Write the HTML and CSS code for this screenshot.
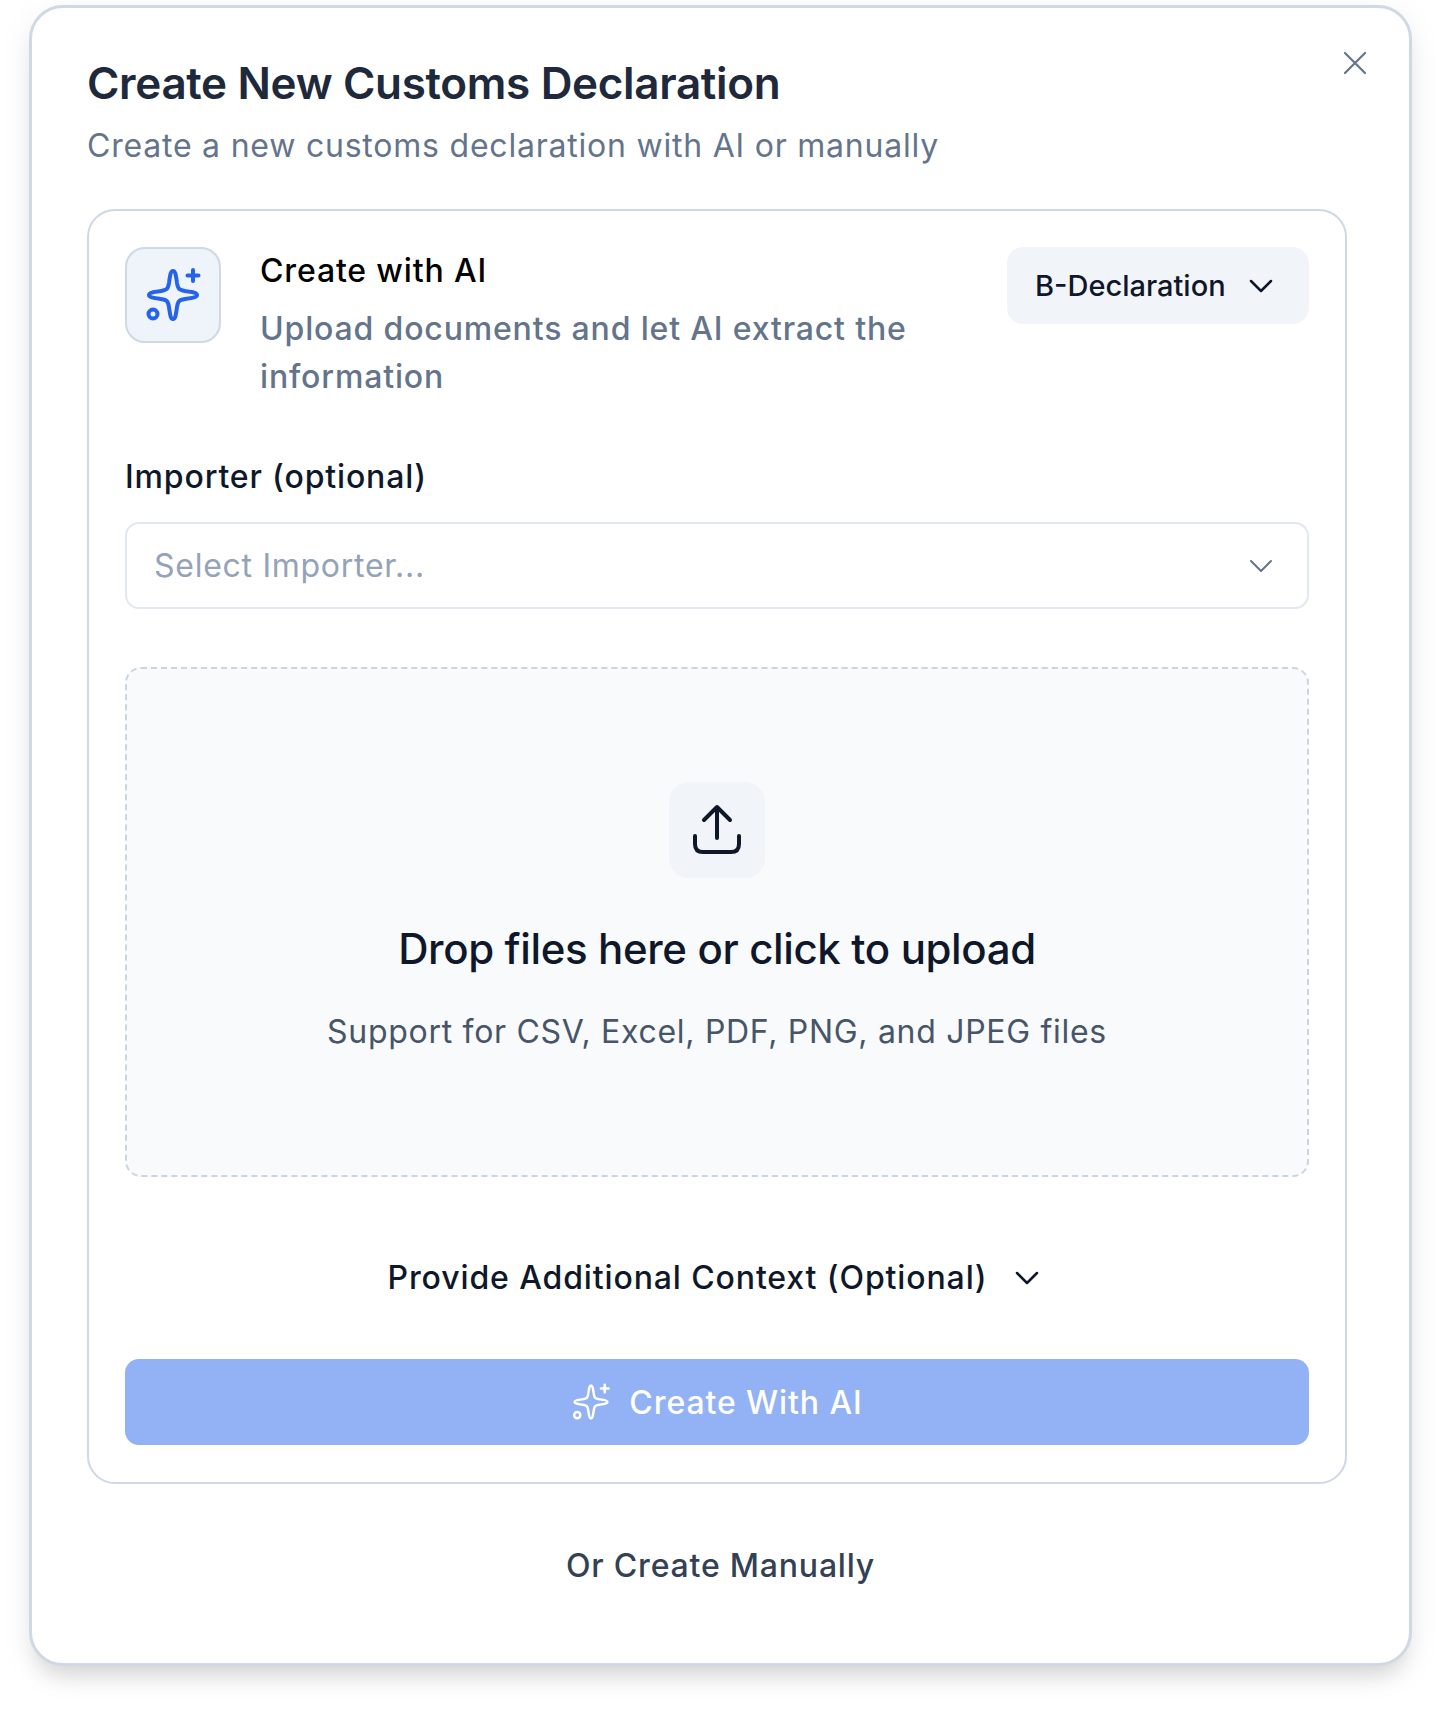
FILE: index.html
```html
<!DOCTYPE html>
<html lang="en">
<head>
    <title>Create New Customs Declaration</title>
    <meta name="viewport" content="width=device-width, initial-scale=1.0">
    <link rel="stylesheet" href="styles.css">
</head>
<body>
    <div class="dialog">
        <button class="close-btn" type="button" aria-label="Close">
            <svg viewBox="0 0 24 24" width="24" height="24"><path d="M2 2 L22 22 M22 2 L2 22"/></svg>
        </button>

        <h1 class="dialog-title">Create New Customs Declaration</h1>
        <p class="dialog-subtitle">Create a new customs declaration with AI or manually</p>

        <div class="ai-card">
            <div class="ai-head">
                <div class="ai-icon">
                    <svg class="sparkle" viewBox="0 0 64 64" width="64" height="64">
                        <path d="M32 8 C34.5 8 35 13 36 20 C37 26 38 27 44 28 C51 29 56 29.5 56 32 C56 34.5 51 35 44 36 C38 37 37 38 36 44 C35 51 34.5 56 32 56 C29.5 56 29 51 28 44 C27 38 26 37 20 36 C13 35 8 34.5 8 32 C8 29.5 13 29 20 28 C26 27 27 26 28 20 C29 13 29.5 8 32 8 Z"/>
                        <path d="M52 7 V18 M46.5 12.5 H57.5"/>
                        <circle cx="12" cy="51" r="4.5"/>
                    </svg>
                </div>
                <div class="ai-text">
                    <h2>Create with AI</h2>
                    <p>Upload documents and let AI extract the information</p>
                </div>
                <div class="type-select">
                    <span>B-Declaration</span>
                    <svg class="chevron" viewBox="0 0 24 14" width="24" height="14"><path d="M2 2 L12 12 L22 2"/></svg>
                </div>
            </div>

            <div class="field-label">Importer (optional)</div>
            <div class="importer-select">
                <span>Select Importer...</span>
                <svg class="chevron chevron-light" viewBox="0 0 24 14" width="24" height="14"><path d="M2 2 L12 12 L22 2"/></svg>
            </div>

            <div class="dropzone">
                <div class="upload-icon">
                    <svg viewBox="0 0 64 64" width="64" height="64">
                        <path d="M32 9 V40 M19 22 L32 9 L45 22"/>
                        <path d="M10 38 V46 Q10 54 18 54 H46 Q54 54 54 46 V38"/>
                    </svg>
                </div>
                <h3>Drop files here or click to upload</h3>
                <p>Support for CSV, Excel, PDF, PNG, and JPEG files</p>
            </div>

            <div class="context-toggle">
                <span>Provide Additional Context (Optional)</span>
                <svg class="chevron" viewBox="0 0 24 14" width="24" height="14"><path d="M2 2 L12 12 L22 2"/></svg>
            </div>

            <button class="create-btn" type="button">
                <svg class="sparkle" viewBox="0 0 64 64" width="44" height="44">
                    <path d="M32 8 C34.5 8 35 13 36 20 C37 26 38 27 44 28 C51 29 56 29.5 56 32 C56 34.5 51 35 44 36 C38 37 37 38 36 44 C35 51 34.5 56 32 56 C29.5 56 29 51 28 44 C27 38 26 37 20 36 C13 35 8 34.5 8 32 C8 29.5 13 29 20 28 C26 27 27 26 28 20 C29 13 29.5 8 32 8 Z"/>
                    <path d="M52 7 V18 M46.5 12.5 H57.5"/>
                    <circle cx="12" cy="51" r="4.5"/>
                </svg>
                <span>Create With AI</span>
            </button>
        </div>

        <div class="manual-link">Or Create Manually</div>
    </div>
</body>
</html>
```

FILE: styles.css
```css
* {
    box-sizing: border-box;
}
body {
    margin: 0;
    padding: 5px 28px 0 29px;
    background-color: #fff;
    font-family: Inter, "Liberation Sans", sans-serif;
    height: 1719px;
    overflow: hidden;
}
svg {
    display: block;
    fill: none;
    stroke-linecap: round;
    stroke-linejoin: round;
}
.dialog {
    position: relative;
    height: 1661px;
    padding: 51px 62px 0 55px;
    background-color: #fff;
    border: 3px solid #cfd8e5;
    border-radius: 34px;
    box-shadow: 0 16px 20px -6px rgba(0, 0, 0, 0.12), 0 8px 36px rgba(0, 0, 0, 0.06);
}
.close-btn {
    position: absolute;
    top: 43px;
    right: 42px;
    padding: 0;
    border: none;
    background: none;
}
.close-btn svg {
    stroke: #64748b;
    stroke-width: 2.2;
}
.dialog-title {
    margin: 0;
    font-size: 44px;
    line-height: 48px;
    font-weight: 600;
    letter-spacing: -0.33px;
    color: #1e293b;
}
.dialog-subtitle {
    margin: 17px 0 0;
    font-size: 32px;
    line-height: 44px;
    letter-spacing: 0.78px;
    color: #64748b;
}
.ai-card {
    margin-top: 41px;
    padding: 36px 36px 37px;
    border: 2px solid #cfd8e5;
    border-radius: 28px;
}
.ai-head {
    display: flex;
    align-items: flex-start;
}
.ai-icon {
    flex: none;
    display: flex;
    align-items: center;
    justify-content: center;
    width: 96px;
    height: 96px;
    margin-right: 39px;
    background-color: #eff3fa;
    border: 2px solid #cfd8e5;
    border-radius: 20px;
}
.ai-icon .sparkle {
    stroke: #2563eb;
    stroke-width: 4;
}
.ai-text {
    flex: 1;
    padding-right: 60px;
}
.ai-text h2 {
    margin: 0;
    font-size: 32px;
    line-height: 48px;
    font-weight: 500;
    letter-spacing: 0.85px;
    color: #000;
}
.ai-text p {
    margin: 10px 0 0;
    font-size: 32px;
    line-height: 48px;
    font-weight: 500;
    letter-spacing: 0.84px;
    color: #64748b;
}
.type-select {
    flex: none;
    display: flex;
    align-items: center;
    justify-content: space-between;
    width: 302px;
    height: 77px;
    padding: 0 36px 0 28px;
    background-color: #f1f5f9;
    border-radius: 16px;
    font-size: 29px;
    font-weight: 500;
    color: #0f172a;
}
.chevron {
    stroke: #0f172a;
    stroke-width: 2.5;
}
.chevron-light {
    stroke: #64748b;
    stroke-width: 2;
}
.field-label {
    margin-top: 54px;
    font-size: 32px;
    line-height: 44px;
    font-weight: 500;
    letter-spacing: 0.85px;
    color: #0f172a;
}
.importer-select {
    display: flex;
    align-items: center;
    justify-content: space-between;
    height: 87px;
    margin-top: 23px;
    padding: 0 34px 0 27px;
    border: 2px solid #e2e8f0;
    border-radius: 14px;
    font-size: 32px;
    letter-spacing: 0.73px;
    color: #94a3b8;
}
.dropzone {
    display: flex;
    flex-direction: column;
    align-items: center;
    height: 510px;
    margin-top: 58px;
    padding-top: 113px;
    background-color: #f8fafc;
    border: 2px dashed #cbd5e1;
    border-radius: 16px;
}
.upload-icon {
    display: flex;
    align-items: center;
    justify-content: center;
    width: 96px;
    height: 96px;
    background-color: #f1f5f9;
    border-radius: 20px;
}
.upload-icon svg {
    stroke: #0f172a;
    stroke-width: 4;
}
.dropzone h3 {
    margin: 47px 0 0;
    font-size: 42px;
    line-height: 48px;
    font-weight: 500;
    letter-spacing: -0.37px;
    color: #0f172a;
}
.dropzone p {
    margin: 37px 0 0;
    font-size: 32px;
    line-height: 44px;
    letter-spacing: 0.7px;
    color: #475569;
}
.context-toggle {
    display: flex;
    align-items: center;
    justify-content: center;
    gap: 28px;
    margin-top: 79px;
    padding-right: 7px;
    font-size: 32px;
    line-height: 44px;
    font-weight: 500;
    letter-spacing: 0.88px;
    color: #0f172a;
}
.create-btn {
    display: flex;
    align-items: center;
    justify-content: center;
    gap: 16px;
    width: 100%;
    height: 86px;
    margin-top: 59px;
    padding: 0 2px 0 0;
    border: none;
    border-radius: 14px;
    background-color: #93b1f5;
    color: #fff;
    font-family: inherit;
    font-size: 32px;
    font-weight: 500;
    letter-spacing: 0.9px;
}
.create-btn .sparkle {
    stroke: #fff;
    stroke-width: 3.6;
}
.manual-link {
    margin-top: 60px;
    padding-left: 7px;
    text-align: center;
    font-size: 32px;
    line-height: 44px;
    font-weight: 500;
    letter-spacing: 0.8px;
    color: #334155;
}
```
